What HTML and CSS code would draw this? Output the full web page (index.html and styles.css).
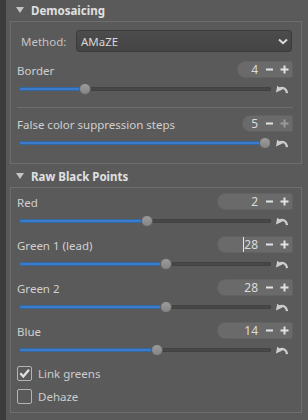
FILE: index.html
```html
<!DOCTYPE html>
<html lang="en">
<head>
    <meta charset="UTF-8">
    <meta name="viewport" content="width=device-width, initial-scale=1.0">
    <title>Raw - Demosaicing</title>
    <link rel="stylesheet" href="styles.css">
</head>
<body>
    <div class="page">
        <div class="edge"></div>
        <div class="panel">

            <!-- Demosaicing -->
            <div class="section-head"><span class="arrow"></span>Demosaicing</div>
            <div class="frame frame-demosaic">
                <div class="combo-row">
                    <span class="combo-label">Method:</span>
                    <div class="combo">
                        <span>AMaZE</span>
                        <svg class="chevron" width="10" height="7" viewBox="0 0 10 7"><path d="M1 1.5 L5 5.2 L9 1.5" fill="none" stroke="#dcdcdc" stroke-width="2"/></svg>
                    </div>
                </div>

                <div class="adjuster first">
                    <div class="adj-top">
                        <span class="adj-label">Border</span>
                        <div class="spin w56">
                            <span class="spin-value">4</span>
                            <span class="spin-btn"><svg width="9" height="9" viewBox="0 0 9 9"><path d="M1 4.5 H8" stroke="#e2e2e2" stroke-width="2"/></svg></span>
                            <span class="spin-btn"><svg width="9" height="9" viewBox="0 0 9 9"><path d="M0.5 4.5 H8.5 M4.5 0.5 V8.5" stroke="#e2e2e2" stroke-width="2"/></svg></span>
                        </div>
                    </div>
                    <div class="adj-bottom">
                        <div class="slider" style="--v: 0.25">
                            <div class="track"></div>
                            <div class="fill"></div>
                            <div class="knob"></div>
                        </div>
                        <span class="reset"><svg width="12" height="10" viewBox="0 0 12 10"><path d="M11 9 C10.5 5 7.5 3 3.5 4.2" fill="none" stroke="#cdcdcd" stroke-width="2.2"/><path d="M0 8.5 L1.2 1.8 L6.5 5.5 Z" fill="#cdcdcd"/></svg></span>
                    </div>
                </div>

                <div class="separator"></div>

                <div class="adjuster">
                    <div class="adj-top">
                        <span class="adj-label">False color suppression steps</span>
                        <div class="spin w51">
                            <span class="spin-value">5</span>
                            <span class="spin-btn"><svg width="9" height="9" viewBox="0 0 9 9"><path d="M1 4.5 H8" stroke="#e2e2e2" stroke-width="2"/></svg></span>
                            <span class="spin-btn disabled"><svg width="9" height="9" viewBox="0 0 9 9"><path d="M0.5 4.5 H8.5 M4.5 0.5 V8.5" stroke="#e2e2e2" stroke-width="2"/></svg></span>
                        </div>
                    </div>
                    <div class="adj-bottom">
                        <div class="slider" style="--v: 1">
                            <div class="track"></div>
                            <div class="fill"></div>
                            <div class="knob"></div>
                        </div>
                        <span class="reset"><svg width="12" height="10" viewBox="0 0 12 10"><path d="M11 9 C10.5 5 7.5 3 3.5 4.2" fill="none" stroke="#cdcdcd" stroke-width="2.2"/><path d="M0 8.5 L1.2 1.8 L6.5 5.5 Z" fill="#cdcdcd"/></svg></span>
                    </div>
                </div>
            </div>

            <!-- Raw Black Points -->
            <div class="section-head"><span class="arrow"></span>Raw Black Points</div>
            <div class="frame frame-black">
                <div class="adjuster">
                    <div class="adj-top">
                        <span class="adj-label">Red</span>
                        <div class="spin w76">
                            <span class="spin-value">2</span>
                            <span class="spin-btn"><svg width="9" height="9" viewBox="0 0 9 9"><path d="M1 4.5 H8" stroke="#e2e2e2" stroke-width="2"/></svg></span>
                            <span class="spin-btn"><svg width="9" height="9" viewBox="0 0 9 9"><path d="M0.5 4.5 H8.5 M4.5 0.5 V8.5" stroke="#e2e2e2" stroke-width="2"/></svg></span>
                        </div>
                    </div>
                    <div class="adj-bottom">
                        <div class="slider" style="--v: 0.508">
                            <div class="track"></div>
                            <div class="fill"></div>
                            <div class="knob"></div>
                        </div>
                        <span class="reset"><svg width="12" height="10" viewBox="0 0 12 10"><path d="M11 9 C10.5 5 7.5 3 3.5 4.2" fill="none" stroke="#cdcdcd" stroke-width="2.2"/><path d="M0 8.5 L1.2 1.8 L6.5 5.5 Z" fill="#cdcdcd"/></svg></span>
                    </div>
                </div>

                <div class="adjuster">
                    <div class="adj-top">
                        <span class="adj-label">Green 1 (lead)</span>
                        <div class="spin w76">
                            <span class="spin-value"><span class="caret"></span>28</span>
                            <span class="spin-btn"><svg width="9" height="9" viewBox="0 0 9 9"><path d="M1 4.5 H8" stroke="#e2e2e2" stroke-width="2"/></svg></span>
                            <span class="spin-btn"><svg width="9" height="9" viewBox="0 0 9 9"><path d="M0.5 4.5 H8.5 M4.5 0.5 V8.5" stroke="#e2e2e2" stroke-width="2"/></svg></span>
                        </div>
                    </div>
                    <div class="adj-bottom">
                        <div class="slider" style="--v: 0.588">
                            <div class="track"></div>
                            <div class="fill"></div>
                            <div class="knob"></div>
                        </div>
                        <span class="reset"><svg width="12" height="10" viewBox="0 0 12 10"><path d="M11 9 C10.5 5 7.5 3 3.5 4.2" fill="none" stroke="#cdcdcd" stroke-width="2.2"/><path d="M0 8.5 L1.2 1.8 L6.5 5.5 Z" fill="#cdcdcd"/></svg></span>
                    </div>
                </div>

                <div class="adjuster">
                    <div class="adj-top">
                        <span class="adj-label">Green 2</span>
                        <div class="spin w76">
                            <span class="spin-value">28</span>
                            <span class="spin-btn"><svg width="9" height="9" viewBox="0 0 9 9"><path d="M1 4.5 H8" stroke="#e2e2e2" stroke-width="2"/></svg></span>
                            <span class="spin-btn"><svg width="9" height="9" viewBox="0 0 9 9"><path d="M0.5 4.5 H8.5 M4.5 0.5 V8.5" stroke="#e2e2e2" stroke-width="2"/></svg></span>
                        </div>
                    </div>
                    <div class="adj-bottom">
                        <div class="slider" style="--v: 0.588">
                            <div class="track"></div>
                            <div class="fill"></div>
                            <div class="knob"></div>
                        </div>
                        <span class="reset"><svg width="12" height="10" viewBox="0 0 12 10"><path d="M11 9 C10.5 5 7.5 3 3.5 4.2" fill="none" stroke="#cdcdcd" stroke-width="2.2"/><path d="M0 8.5 L1.2 1.8 L6.5 5.5 Z" fill="#cdcdcd"/></svg></span>
                    </div>
                </div>

                <div class="adjuster">
                    <div class="adj-top">
                        <span class="adj-label">Blue</span>
                        <div class="spin w76">
                            <span class="spin-value">14</span>
                            <span class="spin-btn"><svg width="9" height="9" viewBox="0 0 9 9"><path d="M1 4.5 H8" stroke="#e2e2e2" stroke-width="2"/></svg></span>
                            <span class="spin-btn"><svg width="9" height="9" viewBox="0 0 9 9"><path d="M0.5 4.5 H8.5 M4.5 0.5 V8.5" stroke="#e2e2e2" stroke-width="2"/></svg></span>
                        </div>
                    </div>
                    <div class="adj-bottom">
                        <div class="slider" style="--v: 0.55">
                            <div class="track"></div>
                            <div class="fill"></div>
                            <div class="knob"></div>
                        </div>
                        <span class="reset"><svg width="12" height="10" viewBox="0 0 12 10"><path d="M11 9 C10.5 5 7.5 3 3.5 4.2" fill="none" stroke="#cdcdcd" stroke-width="2.2"/><path d="M0 8.5 L1.2 1.8 L6.5 5.5 Z" fill="#cdcdcd"/></svg></span>
                    </div>
                </div>

                <div class="check-row first">
                    <span class="checkbox"><svg width="13" height="13" viewBox="0 0 13 13"><path d="M2.3 6.3 L5.3 9.6 L11 2.8" fill="none" stroke="#e0e0e0" stroke-width="2.3"/></svg></span>
                    <span>Link greens</span>
                </div>
                <div class="check-row">
                    <span class="checkbox"></span>
                    <span>Dehaze</span>
                </div>
            </div>
        </div>
    </div>
</body>
</html>
```

FILE: styles.css
```css
body {
    margin: 0;
    font-family: "Noto Sans", "Open Sans", sans-serif;
    font-size: 11.5px;
    background: #5a5a5a;
    color: #d0d0d0;
}

.page {
    display: flex;
    height: 420px;
    overflow: hidden;
}

.edge {
    flex: none;
    width: 6px;
    background: #3c3c3c;
}

.panel {
    flex: 1;
    padding: 0 6px 0 4px;
    margin-top: -2px;
}

/* Section headers */
.section-head {
    display: flex;
    align-items: center;
    height: 23px;
    padding-left: 6px;
    padding-top: 1px;
    box-sizing: border-box;
    font-weight: bold;
    color: #e0e0e0;
}

.arrow {
    width: 0;
    height: 0;
    border-left: 4px solid transparent;
    border-right: 4px solid transparent;
    border-top: 6px solid #c4c4c4;
    margin-right: 7px;
}

/* Frames */
.frame {
    border: 1px solid #6d6d6d;
    padding: 0 8px 0 6px;
}

.frame-demosaic {
    padding-top: 8px;
    padding-bottom: 9px;
}

.frame-black {
    padding-top: 5px;
    padding-bottom: 4px;
}

/* Combo box */
.combo-row {
    display: flex;
    align-items: center;
    height: 22px;
    padding-right: 1px;
}

.combo-label {
    flex: none;
    width: 55px;
    margin-left: 4px;
    color: #c4c4c4;
}

.combo {
    flex: 1;
    height: 22px;
    box-sizing: border-box;
    display: flex;
    align-items: center;
    justify-content: space-between;
    padding: 0 3px 0 4px;
    background: linear-gradient(to bottom, #4c4c4c, #444444);
    border: 1px solid #3b3b3b;
    border-radius: 3px;
    color: #d6d6d6;
}

/* Adjusters */
.adjuster + .adjuster {
    margin-top: 4px;
}

.adjuster.first {
    margin-top: 9px;
}

.adj-top {
    display: flex;
    align-items: center;
    justify-content: space-between;
    height: 17px;
}

.adj-label {
    padding-top: 2px;
}

.adj-bottom {
    display: flex;
    align-items: center;
    height: 22px;
}

.spin {
    display: flex;
    align-items: center;
    justify-content: flex-end;
    height: 17px;
    box-sizing: border-box;
    background: #6a6a6a;
    border: 1px solid #626262;
    border-radius: 8px 2px 2px 8px;
    color: #dadada;
    font-size: 12px;
}

.w56 { width: 56px; }
.w51 { width: 51px; }
.w76 { width: 76px; }

.spin-value {
    display: flex;
    align-items: center;
    margin-right: 4px;
}

.caret {
    width: 1px;
    height: 15px;
    background: #e6e6e6;
}

.spin-btn {
    display: flex;
    align-items: center;
    justify-content: center;
    width: 15px;
    height: 15px;
}

.spin-btn.disabled {
    opacity: 0.4;
}

/* Sliders */
.slider {
    position: relative;
    flex: 1;
    height: 12px;
    margin-left: 2px;
}

.track,
.fill {
    position: absolute;
    top: 50%;
    left: 0;
    height: 4px;
    margin-top: -2px;
    border-radius: 2px;
}

.track {
    right: 0;
    background: #474747;
    box-shadow: inset 0 0 0 1px #424242;
}

.fill {
    width: calc(6px + (100% - 12px) * var(--v));
    background: #3c7bcc;
    box-shadow: inset 0 0 0 1px #33679f;
}

.knob {
    position: absolute;
    top: 0;
    left: calc((100% - 12px) * var(--v));
    width: 12px;
    height: 12px;
    box-sizing: border-box;
    border-radius: 50%;
    background: linear-gradient(to bottom, #9c9c9c, #848484);
    border: 1px solid #5e5e5e;
}

.reset {
    flex: none;
    width: 22px;
    display: flex;
    justify-content: center;
    align-items: center;
}

.separator {
    height: 1px;
    background: #6d6d6d;
    margin: 7px 0;
}

/* Checkboxes */
.check-row {
    display: flex;
    align-items: center;
    height: 23px;
    color: #cccccc;
}

.check-row.first {
    margin-top: 1px;
}

.checkbox {
    flex: none;
    width: 15px;
    height: 15px;
    box-sizing: border-box;
    margin-right: 6px;
    border: 1px solid #b4b4b4;
    border-radius: 2px;
    display: flex;
    align-items: center;
    justify-content: center;
}
```
